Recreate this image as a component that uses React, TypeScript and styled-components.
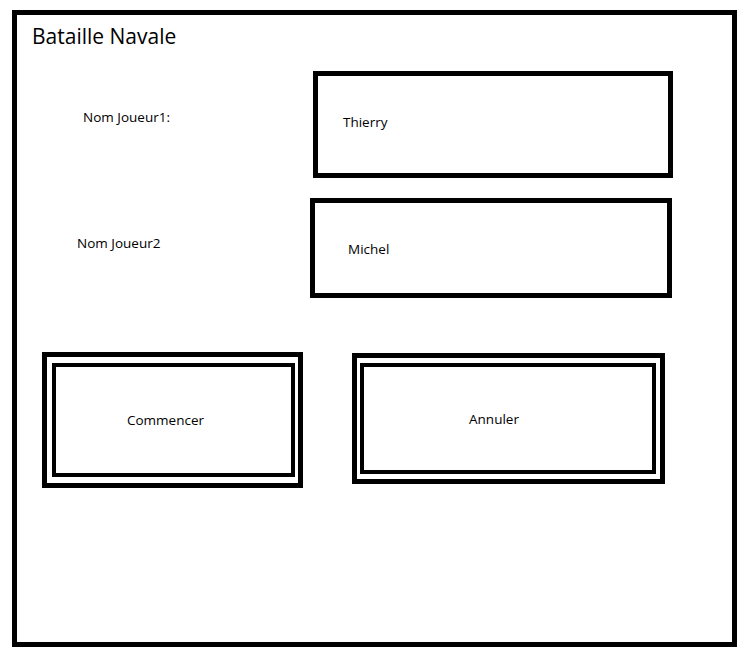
import React from "react";
import styled, { createGlobalStyle } from "styled-components";

const Global = createGlobalStyle`
  html, body {
    margin: 0;
    padding: 0;
    background: #ffffff;
  }
  body {
    font-family: "Open Sans", "Noto Sans", "DejaVu Sans", sans-serif;
    color: #000000;
  }
  * { box-sizing: border-box; }
`;

const Frame = styled.div`
  margin: 10px 0 0 12px;
  width: 725px;
  height: 637px;
  border: 5px solid #000;
  display: flex;
  flex-direction: column;
`;

const Title = styled.h1`
  margin: 9px 0 0 15px;
  font-size: 21px;
  line-height: 24px;
  font-weight: 400;
  letter-spacing: 0;
`;

const Fields = styled.div`
  margin-top: 23px;
  display: flex;
  flex-direction: column;
  gap: 20px;
`;

const Row = styled.div<{ $labelCol: number }>`
  display: grid;
  grid-template-columns: ${(p) => p.$labelCol}px auto;
  align-items: start;
`;

const Label = styled.label<{ $indent: number; $top: number }>`
  padding-left: ${(p) => p.$indent}px;
  margin-top: ${(p) => p.$top}px;
  font-size: 13.5px;
  line-height: 14px;
  white-space: nowrap;
`;

const InputBox = styled.div<{ $w: number; $h: number; $indent: number }>`
  width: ${(p) => p.$w}px;
  height: ${(p) => p.$h}px;
  border: 5px solid #000;
  padding: 39px 0 0 ${(p) => p.$indent}px;
  font-size: 13.5px;
  line-height: 14px;
`;

const Buttons = styled.div`
  margin: 54px 0 0 25px;
  display: flex;
  align-items: flex-start;
  gap: 49px;
`;

const Button = styled.div<{ $w: number; $h: number; $top: number; $pad: string }>`
  width: ${(p) => p.$w}px;
  height: ${(p) => p.$h}px;
  margin-top: ${(p) => p.$top}px;
  border: 5px solid #000;
  padding: ${(p) => p.$pad};
  display: flex;
`;

const ButtonFace = styled.div<{ $shift: number }>`
  flex: 1;
  border: 4px solid #000;
  display: flex;
  align-items: center;
  justify-content: center;
  padding-right: ${(p) => p.$shift * 2}px;
  font-size: 13.5px;
  line-height: 14px;
`;

export default function App() {
  return (
    <>
      <Global />
      <Frame>
        <Title>Bataille Navale</Title>
        <Fields>
          <Row $labelCol={296}>
            <Label $indent={66} $top={39}>Nom Joueur1:</Label>
            <InputBox $w={360} $h={107} $indent={25}>Thierry</InputBox>
          </Row>
          <Row $labelCol={293}>
            <Label $indent={60} $top={38}>Nom Joueur2</Label>
            <InputBox $w={362} $h={100} $indent={33}>Michel</InputBox>
          </Row>
        </Fields>
        <Buttons>
          <Button $w={261} $h={136} $top={0} $pad="6px 3px 6px 5px">
            <ButtonFace $shift={8}>Commencer</ButtonFace>
          </Button>
          <Button $w={313} $h={131} $top={1} $pad="5px 4px 5px 3px">
            <ButtonFace $shift={14}>Annuler</ButtonFace>
          </Button>
        </Buttons>
      </Frame>
    </>
  );
}
